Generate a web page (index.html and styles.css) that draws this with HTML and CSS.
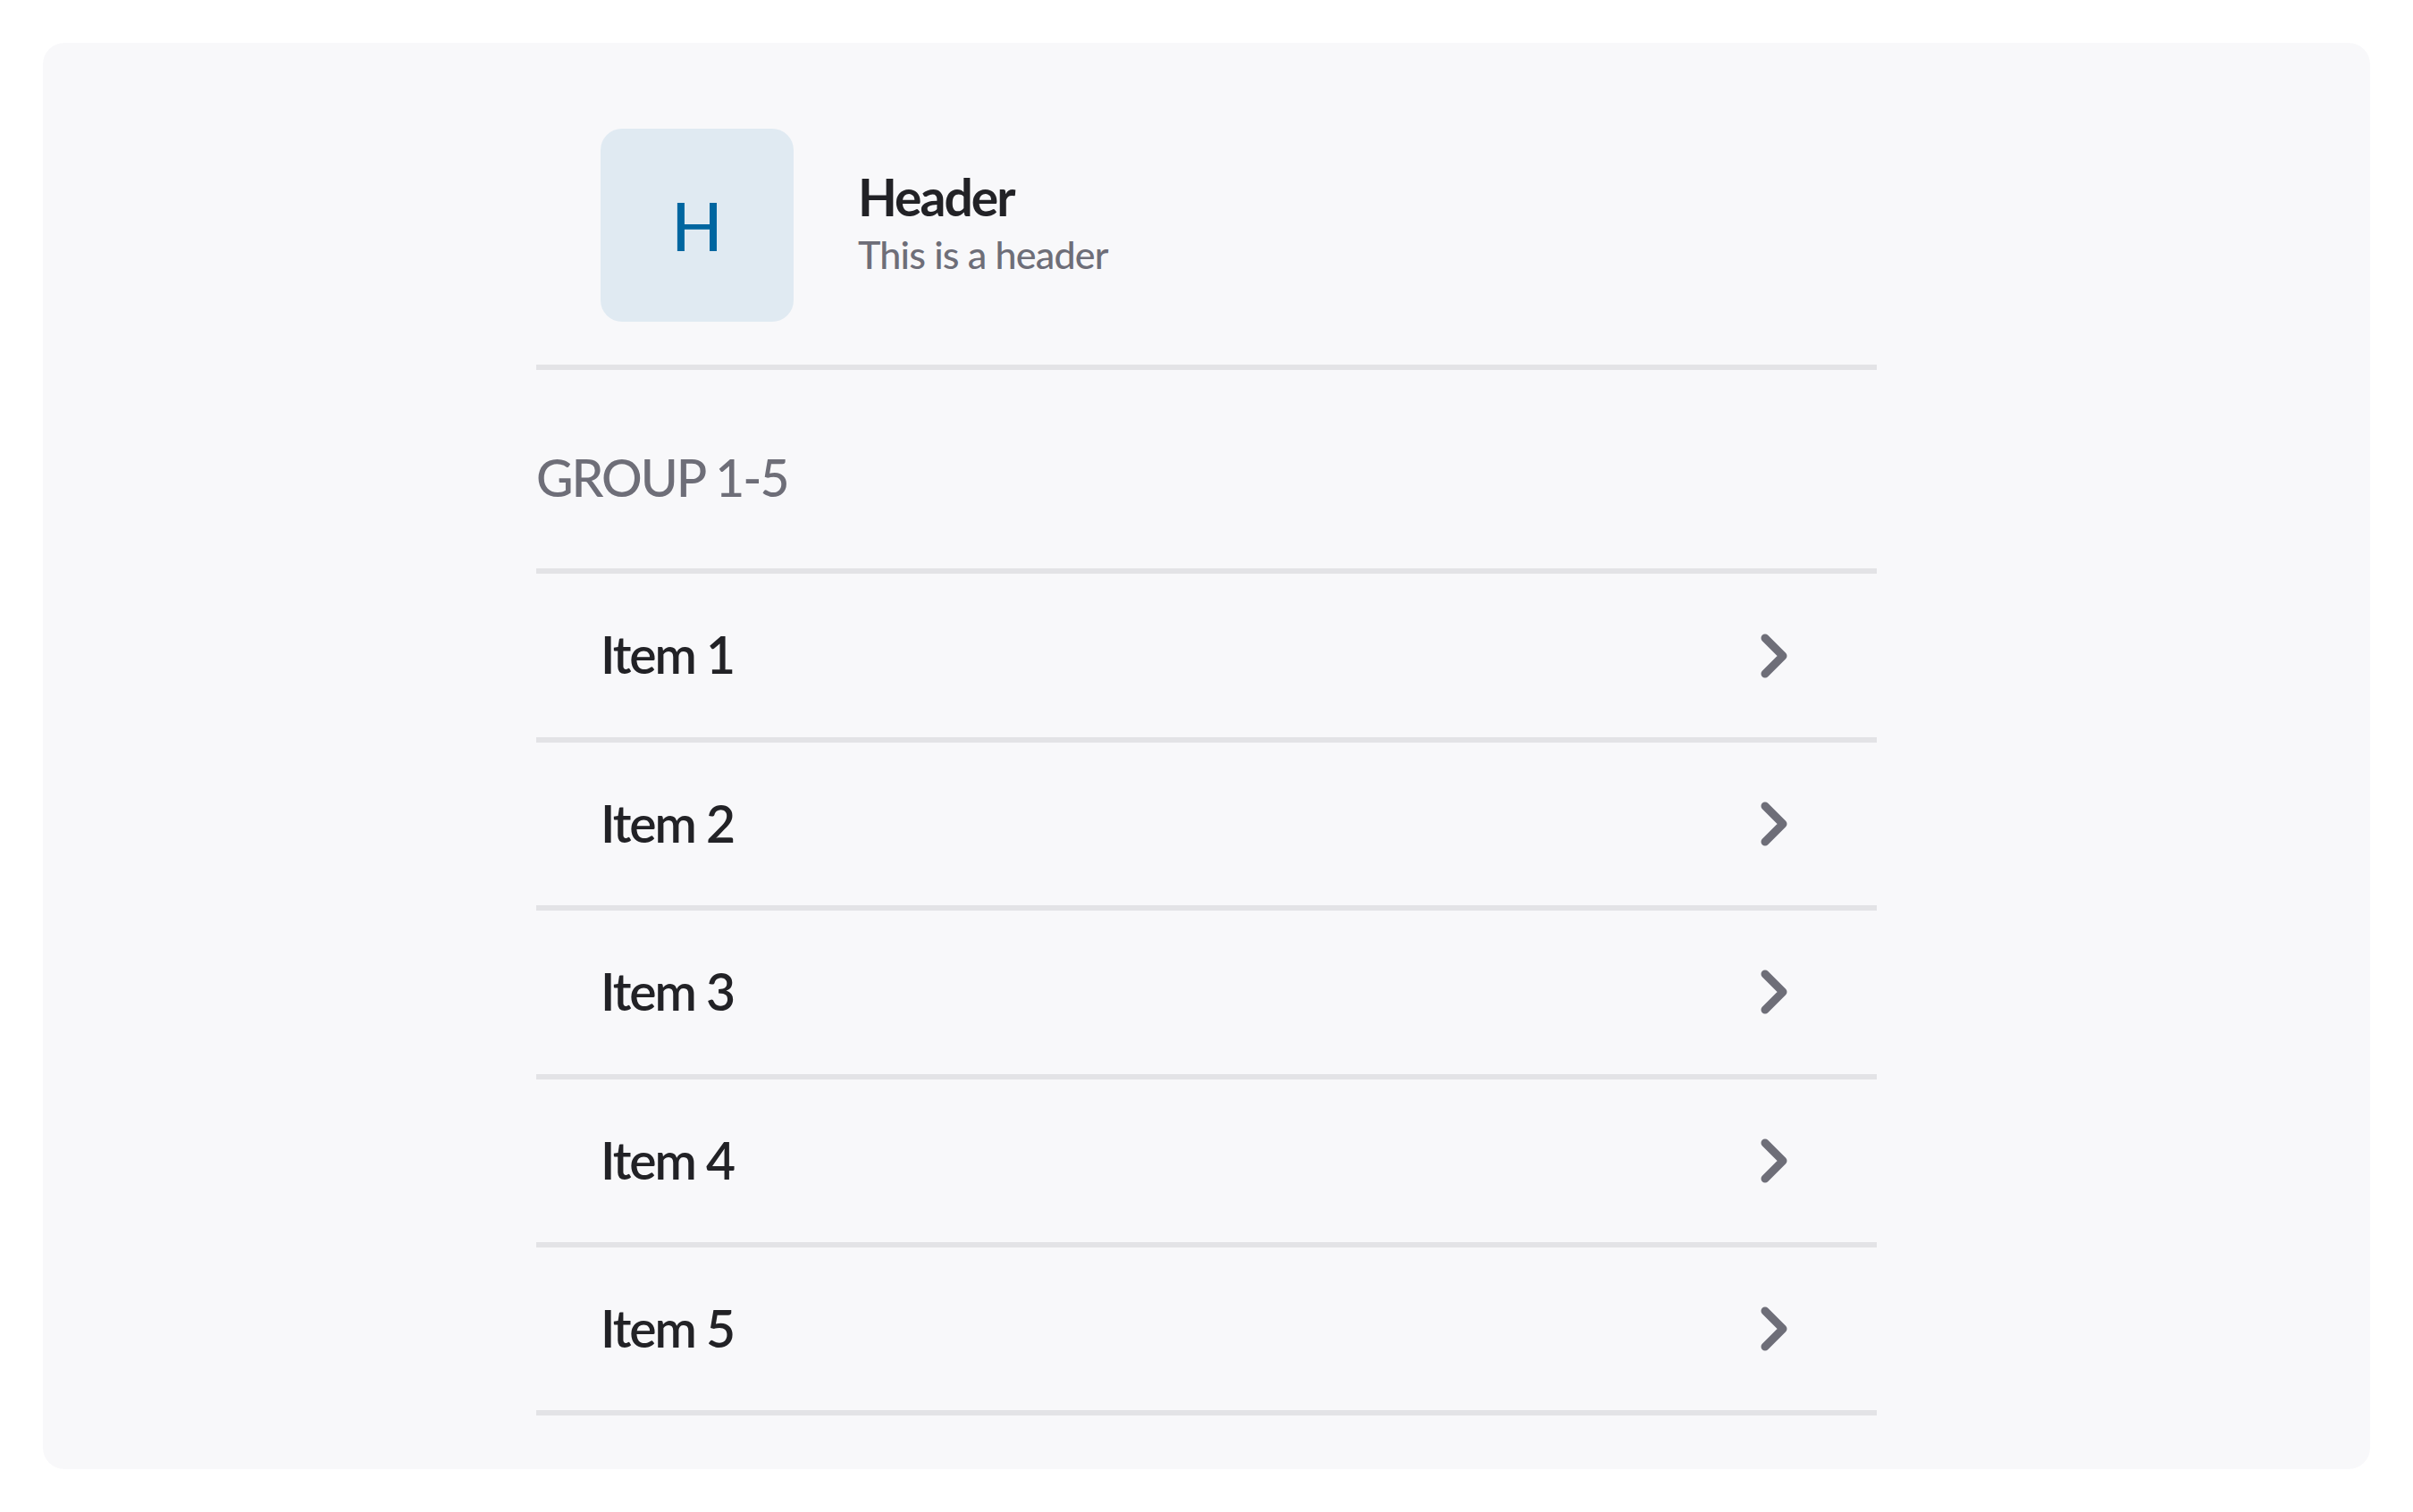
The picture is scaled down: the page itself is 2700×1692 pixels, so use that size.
FILE: index.html
```html
<!DOCTYPE html>
<html lang="en">
<head>
<meta charset="utf-8">
<title>List</title>
<link rel="stylesheet" href="styles.css">
</head>
<body>
<div class="card">
  <div class="content">
    <div class="header">
      <div class="avatar">H</div>
      <div class="header-text">
        <div class="title">Header</div>
        <div class="subtitle">This is a header</div>
      </div>
    </div>
    <div class="group-label">GROUP 1-5</div>
    <ul class="list">
      <li class="row"><span class="label">Item 1</span><svg class="chev" width="30" height="50" viewBox="0 0 30 50"><polyline points="5,5 25,25 5,45"/></svg></li>
      <li class="row"><span class="label">Item 2</span><svg class="chev" width="30" height="50" viewBox="0 0 30 50"><polyline points="5,5 25,25 5,45"/></svg></li>
      <li class="row"><span class="label">Item 3</span><svg class="chev" width="30" height="50" viewBox="0 0 30 50"><polyline points="5,5 25,25 5,45"/></svg></li>
      <li class="row"><span class="label">Item 4</span><svg class="chev" width="30" height="50" viewBox="0 0 30 50"><polyline points="5,5 25,25 5,45"/></svg></li>
      <li class="row"><span class="label">Item 5</span><svg class="chev" width="30" height="50" viewBox="0 0 30 50"><polyline points="5,5 25,25 5,45"/></svg></li>
    </ul>
  </div>
</div>
</body>
</html>
```

FILE: styles.css
```css
* { box-sizing: border-box; }
html, body {
  margin: 0;
  padding: 0;
  background: #ffffff;
}
body {
  font-family: Lato, "Noto Sans", sans-serif;
  color: #222226;
}
.card {
  margin: 48px;
  height: 1596px;
  background: #f8f8fa;
  border-radius: 24px;
  padding-top: 96px;
}
.content {
  width: 1500px;
  margin: 0 auto;
}
.header {
  display: flex;
  align-items: flex-start;
  padding-left: 72px;
  padding-bottom: 48px;
  border-bottom: 6px solid #e3e3e6;
}
.avatar {
  width: 216px;
  height: 216px;
  border-radius: 24px;
  background: #e0eaf2;
  color: #0066a0;
  display: flex;
  align-items: center;
  justify-content: center;
  font-size: 75px;
  font-weight: 500;
  line-height: 1;
}
.header-text {
  margin-left: 72px;
  padding-top: 42px;
}
.title {
  font-size: 57px;
  font-weight: 700;
  letter-spacing: -2px;
  line-height: 68px;
  color: #222226;
}
.subtitle {
  font-size: 43px;
  font-weight: 500;
  letter-spacing: -0.8px;
  line-height: 61px;
  color: #6e6e78;
}
.group-label {
  font-size: 57px;
  font-weight: 500;
  letter-spacing: -2px;
  line-height: 1.2;
  color: #6e6e78;
  padding-top: 86px;
  padding-bottom: 68px;
  border-bottom: 6px solid #e3e3e6;
}
.list {
  list-style: none;
  margin: 0;
  padding: 0;
}
.row {
  display: flex;
  align-items: center;
  justify-content: space-between;
  height: 188.4px;
  padding: 0 100px 0 72px;
  border-bottom: 6px solid #e3e3e6;
}
.label {
  font-size: 57px;
  font-weight: 600;
  letter-spacing: -2px;
  line-height: 1.2;
  padding-bottom: 2px;
  color: #222226;
}
.chev polyline {
  fill: none;
  stroke: #6e6e78;
  stroke-width: 9;
  stroke-linecap: round;
  stroke-linejoin: round;
}
```
